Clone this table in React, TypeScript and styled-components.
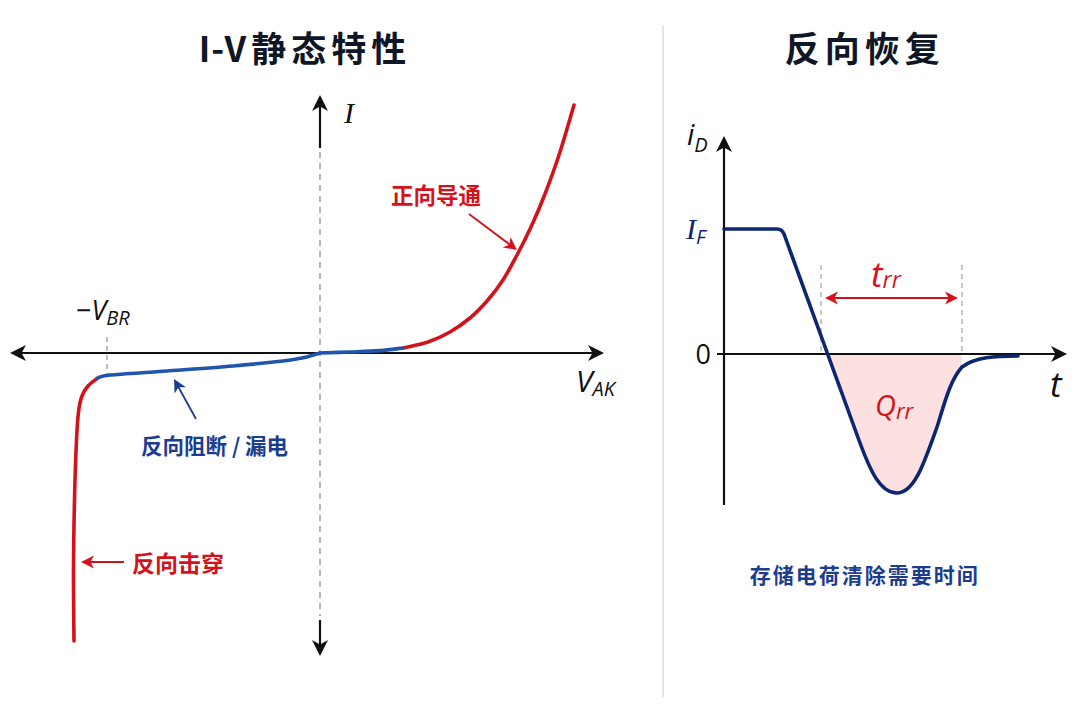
import { FunctionComponent } from 'react';
import styled, { createGlobalStyle } from 'styled-components';

type Pt = [number, number];

// catmull-rom through the points, written out as cubic beziers
const smooth = (pts: Pt[]): string => {
  let d = `M${pts[0][0]} ${pts[0][1]}`;
  for (let i = 0; i < pts.length - 1; i++) {
    const p0 = pts[i - 1] || pts[i];
    const p1 = pts[i];
    const p2 = pts[i + 1];
    const p3 = pts[i + 2] || p2;
    const c1x = p1[0] + (p2[0] - p0[0]) / 6;
    const c1y = p1[1] + (p2[1] - p0[1]) / 6;
    const c2x = p2[0] - (p3[0] - p1[0]) / 6;
    const c2y = p2[1] - (p3[1] - p1[1]) / 6;
    d += ` C${c1x.toFixed(1)} ${c1y.toFixed(1)} ${c2x.toFixed(1)} ${c2y.toFixed(1)} ${p2[0]} ${p2[1]}`;
  }
  return d;
};

const RED = '#d3121c';
const BLUE = '#1f55ad';
const BLUE_TEXT = '#1c3d8f';
const NAVY = '#0d2671';
const INK = '#111111';

const forwardBlue: Pt[] = [
  [320, 353],
  [350, 352],
  [380, 350.6],
  [403, 348],
];
const forwardRed: Pt[] = [
  [403, 348],
  [428, 342],
  [450, 332],
  [470, 318],
  [487, 301],
  [503, 280],
  [517, 255],
  [531, 227],
  [545, 194],
  [560, 152],
  [574, 105],
];
const reverseBlue: Pt[] = [
  [320, 353],
  [302, 358],
  [283, 361],
  [233, 366],
  [167, 371],
  [110, 375],
  [97, 378.5],
];
const reverseRed: Pt[] = [
  [97, 378.5],
  [88, 386],
  [82, 396],
  [78.5, 412],
  [76.5, 440],
  [74.5, 500],
  [73.5, 570],
  [74, 641],
];

const GlobalStyle = createGlobalStyle`
  html, body {
    margin: 0;
    padding: 0;
    background: #ffffff;
  }
  body {
    font-family: "Noto Sans CJK SC", "Noto Sans", sans-serif;
  }
`;

const Page = styled.div`
  display: flex;
  width: 1080px;
  height: 720px;
  background: #ffffff;
  overflow: hidden;
`;

const Panel = styled.section<{ $width?: number }>`
  display: flex;
  flex-direction: column;
  width: ${(p) => (p.$width ? `${p.$width}px` : 'auto')};
  flex: ${(p) => (p.$width ? 'none' : '1')};
`;

const Title = styled.h2<{ $shift: number }>`
  margin: 0;
  padding: 25px ${(p) => p.$shift}px 0 0;
  height: 44px;
  line-height: 44px;
  text-align: center;
  font-family: "Noto Sans CJK SC", "Noto Sans", sans-serif;
  font-weight: 700;
  font-size: 35px;
  letter-spacing: 5px;
  color: #0f1726;
`;

const Latin = styled.span`
  letter-spacing: 1px;
  margin-right: 4px;
`;

const Divider = styled.div`
  width: 1.5px;
  margin: 25px 0 23px;
  background: #e2e5eb;
`;

const Chart = styled.svg`
  display: block;
  flex: none;
  overflow: visible;
`;

const Label = styled.text<{ $serif?: boolean; $upright?: boolean; $size: number; $color?: string }>`
  font-family: ${(p) =>
    p.$serif ? '"Liberation Serif", "DejaVu Serif", serif' : '"Open Sans", "Noto Sans", sans-serif'};
  font-style: ${(p) => (p.$upright ? 'normal' : 'italic')};
  font-size: ${(p) => p.$size}px;
  fill: ${(p) => p.$color || INK};
`;

const Sub = styled.tspan<{ $size: number; $upright?: boolean }>`
  font-family: "Open Sans", "Noto Sans", sans-serif;
  font-style: ${(p) => (p.$upright ? 'normal' : 'italic')};
  font-size: ${(p) => p.$size}px;
`;

const Note = styled.text<{ $color: string; $size: number }>`
  font-family: "Noto Sans CJK SC", "Noto Sans", sans-serif;
  font-weight: 700;
  font-size: ${(p) => p.$size}px;
  fill: ${(p) => p.$color};
`;

const Caption = styled.p`
  margin: 20px 14px 0 0;
  line-height: 30px;
  text-align: center;
  font-family: "Noto Sans CJK SC", "Noto Sans", sans-serif;
  font-weight: 700;
  font-size: 21px;
  letter-spacing: 2px;
  color: ${BLUE_TEXT};
`;

// notched arrow head, tip at (x, y), pointing along angle in degrees
const Head: FunctionComponent<{ x: number; y: number; angle: number; size?: number; color?: string }> = ({
  x,
  y,
  angle,
  size = 16,
  color = INK,
}) => {
  const w = size * 0.5;
  return (
    <polygon
      points={`0,0 ${-size},${-w} ${-size * 0.72},0 ${-size},${w}`}
      fill={color}
      transform={`translate(${x} ${y}) rotate(${angle})`}
    />
  );
};

const Pointer: FunctionComponent<{ x1: number; y1: number; x2: number; y2: number; color: string }> = ({
  x1,
  y1,
  x2,
  y2,
  color,
}) => {
  const angle = (Math.atan2(y2 - y1, x2 - x1) * 180) / Math.PI;
  const len = Math.hypot(x2 - x1, y2 - y1);
  const ex = x2 - ((x2 - x1) / len) * 8;
  const ey = y2 - ((y2 - y1) / len) * 8;
  return (
    <g>
      <line x1={x1} y1={y1} x2={ex} y2={ey} stroke={color} strokeWidth={1.8} />
      <Head x={x2} y={y2} angle={angle} size={13} color={color} />
    </g>
  );
};

const IVChart = () => (
  <Chart width={662} height={651} viewBox="0 69 662 651">
    {/* axes */}
    <line x1={20} y1={353} x2={594} y2={353} stroke={INK} strokeWidth={2.2} />
    <Head x={10} y={353} angle={180} />
    <Head x={604} y={353} angle={0} />
    <line x1={320} y1={106} x2={320} y2={148} stroke={INK} strokeWidth={2.2} />
    <Head x={320} y={95} angle={-90} />
    <line x1={320} y1={152} x2={320} y2={616} stroke="#9a9a9a" strokeWidth={1.4} strokeDasharray="6 5" />
    <line x1={320} y1={620} x2={320} y2={646} stroke={INK} strokeWidth={2.2} />
    <Head x={320} y={656} angle={90} />
    <line x1={107} y1={337} x2={107} y2={377} stroke="#9a9a9a" strokeWidth={1.3} strokeDasharray="5 4" />

    {/* curves */}
    <g fill="none" strokeWidth={3.6} strokeLinecap="round" strokeLinejoin="round">
      <path d={smooth(reverseRed)} stroke={RED} />
      <path d={smooth(forwardRed)} stroke={RED} />
      <path d={smooth(reverseBlue)} stroke={BLUE} />
      <path d={smooth(forwardBlue)} stroke={BLUE} />
    </g>

    {/* axis labels */}
    <Label x={344} y={123} $serif $size={30}>
      I
    </Label>
    <Label x={76} y={320} $size={27}>
      <tspan fontStyle="normal">−</tspan>V<Sub $size={20} dy={5}>BR</Sub>
    </Label>
    <Label x={576} y={392} $size={30}>
      V<Sub $size={20} dy={4}>AK</Sub>
    </Label>

    {/* callouts */}
    <Note x={391} y={204} $color={RED} $size={22.5}>
      正向导通
    </Note>
    <Pointer x1={469} y1={214} x2={517} y2={250} color={RED} />
    <Note x={141} y={454} $color={BLUE_TEXT} $size={21.5}>
      反向阻断 / 漏电
    </Note>
    <Pointer x1={196} y1={419} x2={174} y2={379} color={BLUE_TEXT} />
    <Note x={132} y={572} $color={RED} $size={23}>
      反向击穿
    </Note>
    <Pointer x1={124} y1={562} x2={81} y2={562} color={RED} />
  </Chart>
);

const recovery =
  'M724 229 L777 229 Q782 229 784 234 L860 443 C870 470 880 493 897 493 C915 493 925 460 937 427 C944 405 950 380 962 367 C975 357 995 356 1018 356';
const charge =
  'M829 354 L860 443 C870 470 880 493 897 493 C915 493 925 460 937 427 C944 405 950 380 962 367 L962 354 Z';

const RecoveryChart = () => (
  <Chart width={416} height={470} viewBox="664 69 416 470">
    <path d={charge} fill="#fde1e1" />
    <line x1={821} y1={265} x2={821} y2={354} stroke="#a8a8a8" strokeWidth={1.3} strokeDasharray="5 4" />
    <line x1={962} y1={265} x2={962} y2={354} stroke="#a8a8a8" strokeWidth={1.3} strokeDasharray="5 4" />

    {/* axes */}
    <line x1={724} y1={146} x2={724} y2={505} stroke={INK} strokeWidth={2.2} />
    <Head x={724} y={136} angle={-90} />
    <line x1={717} y1={354} x2={1058} y2={354} stroke={INK} strokeWidth={2.2} />
    <Head x={1067} y={354} angle={0} />

    <path d={recovery} fill="none" stroke={NAVY} strokeWidth={3.6} strokeLinecap="round" strokeLinejoin="round" />

    {/* t_rr span */}
    <line x1={833} y1={298} x2={950} y2={298} stroke={RED} strokeWidth={2} />
    <Head x={825} y={298} angle={180} size={13} color={RED} />
    <Head x={958} y={298} angle={0} size={13} color={RED} />
    <Label x={871} y={287} $size={35} $color={RED}>
      t<Sub $size={23} dy={1}>rr</Sub>
    </Label>
    <Label x={875} y={416} $size={29} $color={RED}>
      Q<Sub $size={22} dy={3}>rr</Sub>
    </Label>

    {/* axis labels */}
    <Label x={687} y={145} $size={29}>
      i<Sub $size={20} dy={7}>D</Sub>
    </Label>
    <Label x={686} y={239} $serif $size={30} $color={NAVY}>
      I<Sub $size={20} dy={5}>F</Sub>
    </Label>
    <Label x={711} y={364} $size={27} $upright textAnchor="end">
      0
    </Label>
    <Label x={1050} y={397} $size={35}>
      t
    </Label>
  </Chart>
);

export default function App() {
  return (
    <>
      <GlobalStyle />
      <Page>
        <Panel $width={662}>
          <Title $shift={52}>
            <Latin>I-V</Latin>静态特性
          </Title>
          <IVChart />
        </Panel>
        <Divider />
        <Panel>
          <Title $shift={14}>反向恢复</Title>
          <RecoveryChart />
          <Caption>存储电荷清除需要时间</Caption>
        </Panel>
      </Page>
    </>
  );
}
